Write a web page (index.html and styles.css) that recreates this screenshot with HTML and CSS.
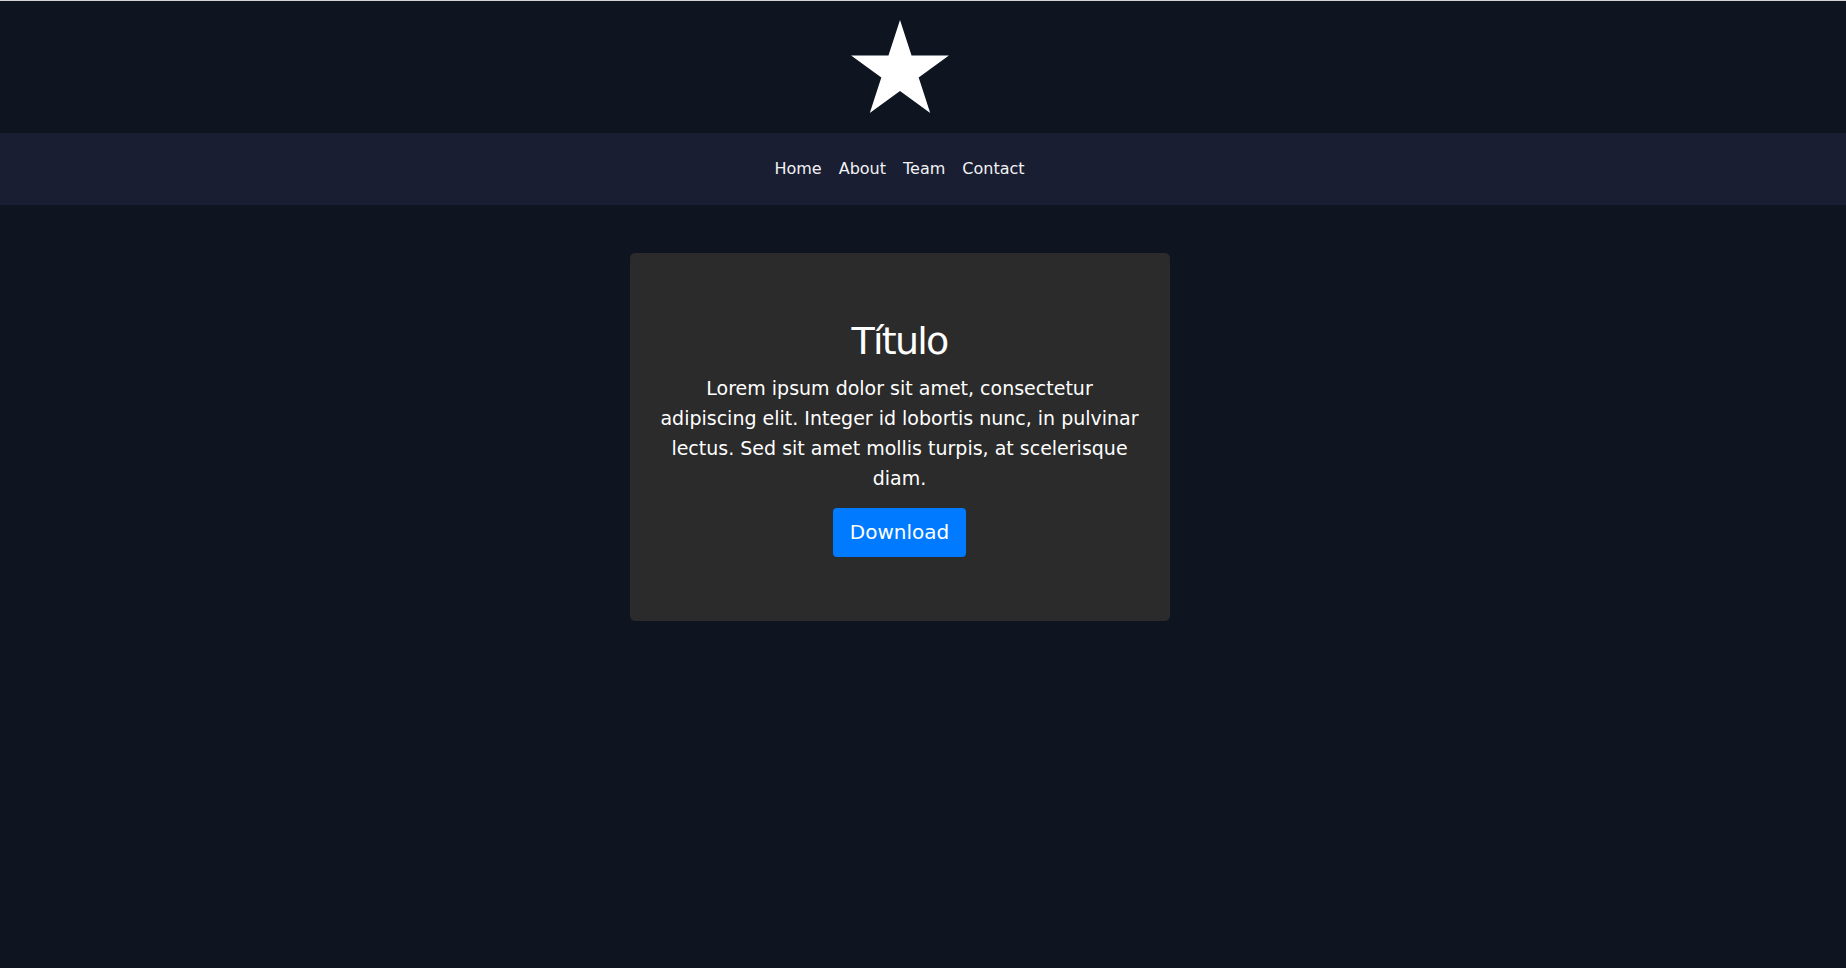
FILE: index.html
```html
<!DOCTYPE html>
<html lang="es">
<head>
<meta charset="utf-8">
<title>Título</title>
<link rel="stylesheet" href="styles.css">
</head>
<body>
<header class="site-header">
  <svg class="logo" viewBox="0 0 100 94" width="100" height="94" aria-label="logo">
    <polygon fill="#ffffff" points="50,0 61.54,35.51 98.89,35.52 68.68,57.47 80.21,92.98 50,71.04 19.79,92.98 31.32,57.47 1.11,35.52 38.46,35.51"/>
  </svg>
</header>
<nav class="site-nav">
  <ul class="nav-list">
    <li><a href="#">Home</a></li>
    <li><a href="#">About</a></li>
    <li><a href="#">Team</a></li>
    <li><a href="#">Contact</a></li>
  </ul>
</nav>
<main class="main">
  <section class="card">
    <h1 class="card-title">Título</h1>
    <p class="card-text">Lorem ipsum dolor sit amet, consectetur adipiscing elit. Integer id lobortis nunc, in pulvinar lectus. Sed sit amet mollis turpis, at scelerisque diam.</p>
    <a class="btn" href="#">Download</a>
  </section>
</main>
</body>
</html>
```

FILE: styles.css
```css
* { box-sizing: border-box; }

html, body {
  margin: 0;
  padding: 0;
}

body {
  background: #0e1420;
  color: #ffffff;
  font-family: "DejaVu Sans", "Liberation Sans", sans-serif;
  border-top: 1px solid #d4d4d4;
  min-height: 100vh;
}

.site-header {
  padding: 19px 47px 19px 0;
  display: flex;
  justify-content: center;
}

.logo {
  display: block;
}

.site-nav {
  background: #1a1e33;
  height: 72px;
  display: flex;
  align-items: center;
  justify-content: center;
  padding-right: 47px;
}

.nav-list {
  list-style: none;
  margin: 0;
  padding: 0;
  display: flex;
  gap: 17px;
}

.nav-list a {
  color: #f2f2f2;
  text-decoration: none;
  font-size: 16px;
  line-height: 22px;
  display: block;
}

.main {
  display: flex;
  justify-content: center;
  padding: 48px 47px 0 0;
}

.card {
  width: 540px;
  background: #2b2b2b;
  border-radius: 5px;
  padding: 65px 30px 64px;
  display: flex;
  flex-direction: column;
  align-items: center;
  text-align: center;
}

.card-title {
  margin: 0;
  font-weight: normal;
  font-size: 38px;
  line-height: 46px;
  letter-spacing: -1.8px;
}

.card-text {
  margin: 9px 0 0;
  font-size: 19px;
  line-height: 30px;
}

.btn {
  margin-top: 15px;
  display: inline-block;
  background: #007bff;
  color: #ffffff;
  text-decoration: none;
  font-size: 20px;
  line-height: 24px;
  padding: 12px 17px 13px;
  border-radius: 4px;
}
```
